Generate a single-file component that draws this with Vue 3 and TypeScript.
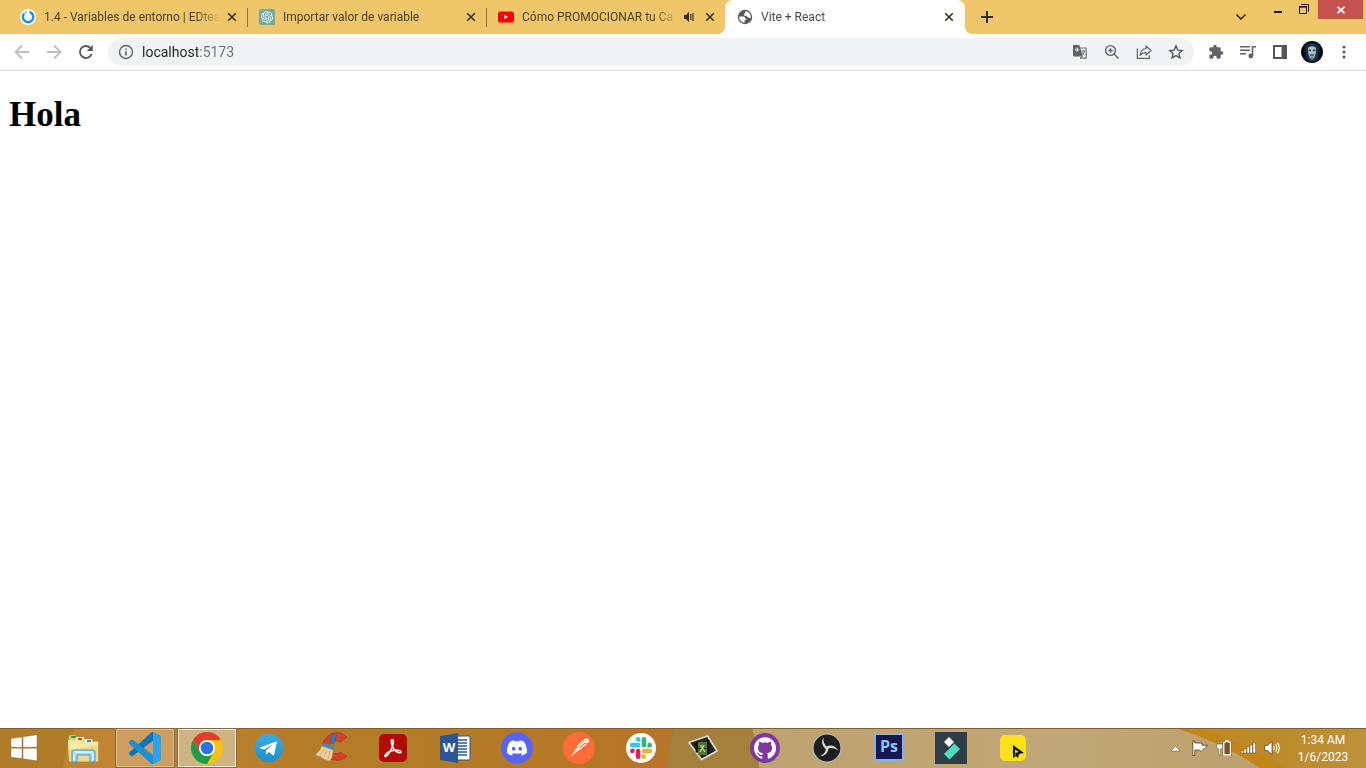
<script setup lang="ts">
import { ref } from 'vue'

interface Tab {
  id: string
  title: string
  audio?: boolean
  active?: boolean
}

const tabs: Tab[] = [
  { id: 'edteam', title: '1.4 - Variables de entorno | EDtea' },
  { id: 'chat', title: 'Importar valor de variable' },
  { id: 'youtube', title: 'Cómo PROMOCIONAR tu Ca', audio: true },
  { id: 'vite', title: 'Vite + React', active: true },
]

const address = ref('localhost:5173')

const slackColors = ['#e01e5a', '#36c5f0', '#2eb67d', '#ecb22e']
const bars = [2, 4, 6, 8, 10]
</script>

<template>
  <div class="desktop">
    <header class="tabstrip">
      <div class="tabs" role="tablist">
        <div
          v-for="tab in tabs"
          :key="tab.id"
          class="tab"
          :class="{ active: tab.active }"
          role="tab"
          :aria-selected="!!tab.active"
        >
          <svg v-if="tab.id === 'edteam'" class="favicon" viewBox="0 0 16 16">
            <circle cx="8" cy="8" r="8" fill="#fff" />
            <path d="M9.5 3A5.2 5.2 0 1 1 4.2 4.5" fill="none" stroke="#1f8fe0" stroke-width="2.4" />
            <path d="M4.6 4.2A5.2 5.2 0 0 1 7.2 2.9" fill="none" stroke="#8cc8f2" stroke-width="2" />
          </svg>
          <svg v-else-if="tab.id === 'chat'" class="favicon" viewBox="0 0 32 32">
            <path d="M5 0h22a5 5 0 0 1 5 5v27H5a5 5 0 0 1-5-5V5a5 5 0 0 1 5-5z" fill="#74aa9c" />
            <path
              transform="translate(4 4)"
              fill="#fff"
              d="M22.2819 9.8211a5.9847 5.9847 0 0 0-.5157-4.9108 6.0462 6.0462 0 0 0-6.5098-2.9A6.0651 6.0651 0 0 0 4.9807 4.1818a5.9847 5.9847 0 0 0-3.9977 2.9 6.0462 6.0462 0 0 0 .7427 7.0966 5.98 5.98 0 0 0 .511 4.9107 6.051 6.051 0 0 0 6.5146 2.9001A5.9847 5.9847 0 0 0 13.2599 24a6.0557 6.0557 0 0 0 5.7718-4.2058 5.9894 5.9894 0 0 0 3.9977-2.9001 6.0557 6.0557 0 0 0-.7475-7.0729zm-9.022 12.6081a4.4755 4.4755 0 0 1-2.8764-1.0408l.1419-.0804 4.7783-2.7582a.7948.7948 0 0 0 .3927-.6813v-6.7369l2.02 1.1686a.071.071 0 0 1 .038.052v5.5826a4.504 4.504 0 0 1-4.4945 4.4944zm-9.6607-4.1254a4.4708 4.4708 0 0 1-.5346-3.0137l.142.0852 4.783 2.7582a.7712.7712 0 0 0 .7806 0l5.8428-3.3685v2.3324a.0804.0804 0 0 1-.0332.0615L9.74 19.9502a4.4992 4.4992 0 0 1-6.1408-1.6464zM2.3408 7.8956a4.485 4.485 0 0 1 2.3655-1.9728V11.6a.7664.7664 0 0 0 .3879.6765l5.8144 3.3543-2.0201 1.1685a.0757.0757 0 0 1-.071 0l-4.8303-2.7865A4.504 4.504 0 0 1 2.3408 7.872zm16.5963 3.8558L13.1038 8.364 15.1192 7.2a.0757.0757 0 0 1 .071 0l4.8303 2.7913a4.4944 4.4944 0 0 1-.6765 8.1042v-5.6772a.79.79 0 0 0-.407-.667zm2.0107-3.0231l-.142-.0852-4.7735-2.7818a.7759.7759 0 0 0-.7854 0L9.409 9.2297V6.8974a.0662.0662 0 0 1 .0284-.0615l4.8303-2.7866a4.4992 4.4992 0 0 1 6.6802 4.66zM8.3065 12.863l-2.02-1.1638a.0804.0804 0 0 1-.038-.0567V6.0742a4.4992 4.4992 0 0 1 7.3757-3.4537l-.142.0805L8.704 5.459a.7948.7948 0 0 0-.3927.6813zm1.0976-2.3654l2.602-1.4998 2.6069 1.4998v2.9994l-2.5974 1.4997-2.6067-1.4997Z"
            />
          </svg>
          <svg v-else-if="tab.id === 'youtube'" class="favicon" viewBox="0 0 16 16">
            <rect y="2.5" width="16" height="11" rx="2.6" fill="#f00" />
            <path d="M6.3 5.9v4.2l3.8-2.1z" fill="#fff" />
          </svg>
          <svg v-else class="favicon" viewBox="0 0 16 16">
            <circle cx="8" cy="8" r="7.2" fill="#55595d" />
            <path
              d="M2.2 7.5h4.3c1.4 0 1.6 1 1.4 1.9h1.3v1.6H7.6v2.8a5.8 5.8 0 0 1-5.4-6.3zM8.2 2.2a5.8 5.8 0 0 1 5.6 6.2c-.7 1-1.9.9-2.3-.2-.8.2-1.9-.3-1.9-1.4H7.2V5c0-.8 1-.9 1-1.6z"
              fill="#fff"
            />
          </svg>
          <span class="title">{{ tab.title }}</span>
          <svg v-if="tab.audio" class="audio" viewBox="0 0 16 16">
            <path d="M2 6h2l3-3.2v10.4L4 10H2z" fill="#37301c" />
            <path d="M8.8 5v6M11 4v8" stroke="#37301c" stroke-width="1.2" />
          </svg>
          <button class="close-tab" type="button" aria-label="Cerrar pestaña">
            <svg viewBox="0 0 16 16"><path d="M4.2 4.2l7.6 7.6M11.8 4.2l-7.6 7.6" stroke="currentColor" stroke-width="1.6" /></svg>
          </button>
        </div>
        <button class="new-tab" type="button" aria-label="Nueva pestaña">
          <svg viewBox="0 0 16 16"><path d="M8 2v12M2 8h12" stroke="#2c2c2c" stroke-width="2" /></svg>
        </button>
      </div>
      <div class="window-controls">
        <button class="tab-search" type="button" aria-label="Buscar pestañas">
          <svg viewBox="0 0 16 16"><path d="M3.5 5.5L8 10l4.5-4.5" fill="none" stroke="#37301c" stroke-width="1.7" /></svg>
        </button>
        <button class="win" type="button" aria-label="Minimizar">
          <svg viewBox="0 0 16 16"><path d="M4 10h8v2H4z" fill="#1d1a10" /></svg>
        </button>
        <button class="win" type="button" aria-label="Restaurar">
          <svg viewBox="0 0 16 16">
            <path d="M3.5 5.5h7v7h-7zM5.5 4V3.500h7v7H12" fill="none" stroke="#1d1a10" />
            <path d="M3 5h8v1.6H3z" fill="#1d1a10" />
          </svg>
        </button>
        <button class="win-close" type="button" aria-label="Cerrar">
          <svg viewBox="0 0 16 16"><path d="M4.5 4.8l7 6.4M11.5 4.8l-7 6.4" stroke="#fff" stroke-width="1.8" /></svg>
        </button>
      </div>
    </header>

    <nav class="toolbar">
      <button class="tool" type="button" aria-label="Atrás" disabled>
        <svg viewBox="0 0 16 16"><path d="M15 8H2M8 1.5L1.5 8 8 14.5" fill="none" stroke="#bbbdc0" stroke-width="1.8" /></svg>
      </button>
      <button class="tool" type="button" aria-label="Adelante" disabled>
        <svg viewBox="0 0 16 16"><path d="M1 8h13M8 1.5L14.5 8 8 14.5" fill="none" stroke="#bbbdc0" stroke-width="1.8" /></svg>
      </button>
      <button class="tool" type="button" aria-label="Recargar">
        <svg viewBox="0 0 16 16">
          <path d="M13.6 10A6 6 0 1 1 12.3 3.8" fill="none" stroke="#54585d" stroke-width="1.9" />
          <path d="M14.8 1v6H8.800z" fill="#54585d" />
        </svg>
      </button>
      <form class="omnibox" @submit.prevent>
        <svg class="info" viewBox="0 0 16 16">
          <circle cx="8" cy="8" r="6.5" fill="none" stroke="#5f6368" stroke-width="1.4" />
          <path d="M7.2 7.2h1.6v4.300H7.2zM7.2 4.4h1.6V6H7.2z" fill="#5f6368" />
        </svg>
        <input v-model="address" class="address" type="text" aria-label="Barra de direcciones" spellcheck="false" />
        <button class="action" type="button" aria-label="Traducir">
          <svg viewBox="0 0 16 16">
            <path d="M8 4h6.2v10.2H8" fill="none" stroke="#6f7377" stroke-width="1.2" />
            <path d="M1 1h6.3l3.5 11.5H2a1 1 0 0 1-1-1z" fill="#5f6368" />
            <path d="M7.2 5.4H5.1v.9h1.2a1.5 1.5 0 1 1-.3-1.8" fill="none" stroke="#f1f3f4" stroke-width=".9" />
            <path d="M9.3 7h4M11.2 6v1M12.5 7c-.3 1.6-1.2 2.7-2.3 3.5M10 8.5c.8 1.3 1.7 2 2.7 2.5" fill="none" stroke="#5f6368" stroke-width=".9" />
            <path d="M8 14.5l2.5-2" stroke="#5f6368" />
          </svg>
        </button>
        <button class="action" type="button" aria-label="Zoom">
          <svg viewBox="0 0 16 16">
            <circle cx="6.5" cy="6.5" r="4.9" fill="none" stroke="#5f6368" stroke-width="1.4" />
            <path d="M10 10l4.5 4.5M4.2 6.5h4.6M6.5 4.2v4.6" stroke="#5f6368" stroke-width="1.4" />
          </svg>
        </button>
        <button class="action" type="button" aria-label="Compartir">
          <svg viewBox="0 0 16 16">
            <path d="M1.3 4.500v9.800h12v-3" fill="none" stroke="#5f6368" stroke-width="1.2" />
            <path d="M10 2l5 4.500-5 4.500V8.500C7.500 8.500 5.500 9.300 4 11.300 4.500 7.500 6.500 5 10 4.500z" fill="none" stroke="#5f6368" stroke-width="1.2" stroke-linejoin="round" />
          </svg>
        </button>
        <button class="action" type="button" aria-label="Favorito">
          <svg viewBox="0 0 16 16">
            <path d="M8 1.9l1.8 4.2 4.5.4-3.4 3 1 4.4L8 11.600l-3.900 2.300 1-4.400-3.400-3 4.500-.4z" fill="none" stroke="#54585d" stroke-width="1.4" />
          </svg>
        </button>
      </form>
      <button class="tool" type="button" aria-label="Extensiones">
        <svg viewBox="0 0 24 24"><path fill="#5f6368" d="M20.5 11H19V7c0-1.100-.9-2-2-2h-4V3.500a2.500 2.500 0 0 0-5 0V5H4c-1.100 0-2 .9-2 2v3.800h1.500a2.700 2.700 0 0 1 0 5.400H2V20c0 1.100.9 2 2 2h3.800v-1.500a2.700 2.700 0 0 1 5.400 0V22H17c1.100 0 2-.9 2-2v-4h1.500a2.500 2.500 0 0 0 0-5z" /></svg>
      </button>
      <button class="tool" type="button" aria-label="Multimedia">
        <svg viewBox="0 0 16 16">
          <path d="M0 2.800h10M0 6.300h10M0 9.800h6M12.500 12V2.800H16" fill="none" stroke="#5f6368" stroke-width="1.600" />
          <circle cx="10.800" cy="12" r="2.400" fill="#5f6368" />
        </svg>
      </button>
      <button class="tool" type="button" aria-label="Panel lateral">
        <svg viewBox="0 0 16 16"><path d="M1 1h14v14H1zM3 3v10h6.500V3z" fill="#54585d" fill-rule="evenodd" /></svg>
      </button>
      <button class="avatar" type="button" aria-label="Perfil">
        <svg viewBox="0 0 22 22">
          <circle cx="11" cy="11" r="11" fill="#050a14" />
          <path d="M4 7c1-4 4-5 7-5s6 1 7 5l-1 9-3 4H8l-3-4z" fill="#123049" />
          <path d="M7 7c2-2.500 6-2.500 8 0l-.3 6-1.700 4-2 2-2-2-1.700-4z" fill="#a9c0c2" />
          <path d="M8 9l2 .6M14 9l-2 .6" stroke="#050a14" stroke-width="1.200" />
          <path d="M8.500 13.300c1 .8 1.500 0 2.500 0s1.500.8 2.500 0c-.5 1.500-1.500 1.300-2.500 1.200-1 .1-2 .3-2.500-1.200zM10.600 15.500h.8v2.500h-.8z" fill="#050a14" />
        </svg>
      </button>
      <button class="tool" type="button" aria-label="Menú">
        <svg viewBox="0 0 16 16"><circle cx="8" cy="3" r="1.5" fill="#54585d" /><circle cx="8" cy="8" r="1.5" fill="#54585d" /><circle cx="8" cy="13" r="1.5" fill="#54585d" /></svg>
      </button>
    </nav>

    <main class="page">
      <h1>Hola</h1>
    </main>

    <footer class="taskbar">
      <svg class="wallpaper" viewBox="0 0 1366 40" preserveAspectRatio="none" aria-hidden="true">
        <defs>
          <linearGradient id="wall-left">
            <stop offset="0" stop-color="#b9822f" /><stop offset=".1" stop-color="#c18535" />
            <stop offset=".2" stop-color="#b57d2a" /><stop offset=".35" stop-color="#b37b28" />
            <stop offset=".48" stop-color="#b87428" />
          </linearGradient>
          <linearGradient id="wall-mid">
            <stop offset="0" stop-color="#bea26f" /><stop offset=".5" stop-color="#c1a878" /><stop offset="1" stop-color="#b99c66" />
          </linearGradient>
          <linearGradient id="wall-right">
            <stop offset="0" stop-color="#c48a22" /><stop offset=".5" stop-color="#bc8a2a" /><stop offset="1" stop-color="#bc923c" />
          </linearGradient>
        </defs>
        <path d="M0 0h1366v40H0z" fill="url(#wall-left)" />
        <path d="M0 0h75q-9 18-12 40H0z" fill="#b17c29" />
        <path d="M674 0h78l8 40h-93q1-22 7-40z" fill="#a5803c" />
        <path d="M752 0h614v40H759q-1-22-7-40z" fill="url(#wall-mid)" />
        <path d="M1176 0h190v40h-106q-36-25-84-40z" fill="url(#wall-right)" />
        <path d="M1176 0h24q44 16 85 40h-25q-36-25-84-40z" fill="#c28618" />
        <path d="M0 0h1366v1H0z" fill="#80602a" />
      </svg>

      <button class="start" type="button" aria-label="Inicio">
        <svg viewBox="0 0 28 28"><path d="M1 4.500l11-1.600v10.400H1zM13 2.700L27 .8v12.500H13zM1 14.300h11v10.300L1 23.200zM13 14.300h14v12.500l-14-2z" fill="#fff" stroke="#80602a" stroke-width=".4" /></svg>
      </button>

      <div class="apps">
        <button class="app" type="button" aria-label="Explorador">
          <svg viewBox="0 0 32 32">
            <path d="M1.500 6l1-3h6l1 2h7l1 2h7l1 2h6v21H2z" fill="#edcf76" stroke="#b38b34" stroke-width=".6" />
            <path d="M4 4h5v2H4z" fill="#2ea043" /><path d="M9 5h8v3H9z" fill="#fff5d0" /><path d="M11 6h4v2h-4z" fill="#d8402c" /><path d="M17 7h8v3h-8z" fill="#fff5d0" /><path d="M20 8h4v2h-4z" fill="#2f8ed6" />
            <path d="M1 8h14l1.500 2H31v19H2z" fill="#f9e9a6" />
            <path d="M2 18l29-5v16H2z" fill="#eed98b" />
            <path d="M5 20q0-2 2-2h19q2 0 2 2v10h-5v-7H10v7H5z" fill="#a9d9ef" stroke="#4a96c4" />
            <path d="M7 20h19M7 22v6M26 22v6" stroke="#e2f5fc" stroke-width="1.500" />
          </svg>
        </button>
        <button class="app running" type="button" aria-label="Visual Studio Code">
          <svg viewBox="0 0 24 24">
            <path fill="#0f75bb" d="M23.150 2.587L18.210.210a1.494 1.494 0 0 0-1.705.290l-9.460 8.630-4.120-3.128a.999.999 0 0 0-1.276.057L.327 7.261A1 1 0 0 0 .326 8.740L3.899 12 .326 15.260a1 1 0 0 0 .001 1.479L1.650 17.940a.999.999 0 0 0 1.276.057l4.120-3.128 9.460 8.630a1.492 1.492 0 0 0 1.704.290l4.942-2.377A1.500 1.500 0 0 0 24 20.060V3.939a1.500 1.500 0 0 0-.850-1.352zm-5.146 14.861L10.826 12l7.178-5.448v10.896z" />
            <path fill="#1f8fd6" d="M1.650 6.060a1 1 0 0 1 1.276-.057L18 17.450V23.800a1.500 1.500 0 0 1-1.500-.300L.33 8.740a1 1 0 0 1 0-1.480z" />
            <path fill="#2ba3ec" d="M18 .15l5.150 2.437A1.500 1.500 0 0 1 24 3.939V20.060a1.500 1.500 0 0 1-.850 1.352L18 23.850z" />
          </svg>
        </button>
        <button class="app running current" type="button" aria-label="Google Chrome">
          <svg viewBox="0 0 32 32">
            <circle cx="16" cy="16" r="16" fill="#fbc116" />
            <path d="M2.140 8A16 16 0 0 1 29.860 8H16a8 8 0 0 0-6.930 12z" fill="#e33b2e" />
            <path d="M2.140 8A16 16 0 0 0 16 32l6.930-12A8 8 0 0 1 9.070 20z" fill="#229a48" />
            <circle cx="16" cy="16" r="8" fill="#fff" /><circle cx="16" cy="16" r="6.300" fill="#2a72e8" />
          </svg>
        </button>
        <button class="app" type="button" aria-label="Telegram">
          <svg viewBox="0 0 32 32">
            <defs>
              <linearGradient id="telegram" x1="0" y1="0" x2="0" y2="1">
                <stop offset="0" stop-color="#35aee4" /><stop offset="1" stop-color="#1f8fca" />
              </linearGradient>
            </defs>
            <circle cx="16" cy="16" r="14.300" fill="url(#telegram)" />
            <path d="M6.500 15.700L22.800 9.400q1.200-.3 1 1L21.200 22.300q-.3 1.300-1.500.6l-4-3-2 2q-.6.6-.8-.4l.2-3 7.300-6.600-9 5.700-4-1.200q-1-.3-.9-.7z" fill="#fff" />
          </svg>
        </button>
        <button class="app" type="button" aria-label="CCleaner">
          <svg viewBox="0 0 32 32">
            <path d="M32 5A14 14 0 1 0 32 24l-7-4a6.500 6.500 0 1 1 0-9.500z" fill="#d2402e" stroke="#a52c1e" stroke-width=".5" />
            <path d="M17 3l3-1.500L21.500 3l-3 9-3-1z" fill="#2682c5" stroke="#1763a0" stroke-width=".5" />
            <path d="M9 11l10 4-1 4-11-4z" fill="#2f91cf" />
            <path d="M7 14l11 4q0 7-3 11-6-1-9-4l-6-2q5-4 7-9z" fill="#efcf9c" stroke="#b58c56" stroke-width=".6" />
            <path d="M9 17l-4 6M12 18l-3 7M15 19l-2 8" stroke="#bd965f" stroke-width=".7" />
          </svg>
        </button>
        <button class="app" type="button" aria-label="Adobe Acrobat">
          <svg viewBox="0 0 32 32">
            <rect x="2" y="2" width="28" height="28" rx="5" fill="#b30b00" />
            <path d="M8 23.500c2-4 6-5 10-5.300 3-.2 6 .3 6 1.700s-3 1-5-.8c-3-2.500-4.500-7-4.700-9.500s1.900-2.400 2.100-.2c.3 4-3.400 11-5.900 13.700-1.500 1.600-3.200 1.600-2.500.4z" fill="none" stroke="#fff" stroke-width="1.600" />
          </svg>
        </button>
        <button class="app" type="button" aria-label="Word">
          <svg viewBox="0 0 32 32">
            <path d="M17 4h13q1 0 1 1v22q0 1-1 1H17z" fill="#fff" stroke="#2b579a" />
            <path d="M19 8h9M19 11h9M19 14h9M19 17h9M19 20h9M19 23h9" stroke="#2b579a" stroke-width="1.300" />
            <path d="M1 4l18-3v30L1 28z" fill="#2b579a" />
            <text x="10" y="20" text-anchor="middle" class="word-mark">W</text>
          </svg>
        </button>
        <button class="app" type="button" aria-label="Discord">
          <svg viewBox="0 0 32 32">
            <circle cx="16" cy="16" r="16" fill="#5865f2" />
            <path
              transform="translate(6 6) scale(.83)"
              fill="#fff"
              d="M20.317 4.370a19.791 19.791 0 0 0-4.885-1.515.074.074 0 0 0-.079.037c-.211.375-.445.865-.608 1.250-1.845-.276-3.680-.276-5.487 0-.164-.393-.406-.874-.618-1.250a.077.077 0 0 0-.079-.037 19.736 19.736 0 0 0-4.885 1.515.070.070 0 0 0-.032.028C.533 9.046-.319 13.580.099 18.058a.082.082 0 0 0 .031.056c2.053 1.508 4.041 2.423 5.993 3.029a.078.078 0 0 0 .084-.028c.462-.630.873-1.295 1.226-1.994a.076.076 0 0 0-.042-.106c-.653-.248-1.274-.550-1.872-.892a.077.077 0 0 1-.008-.128c.126-.094.252-.192.372-.291a.074.074 0 0 1 .078-.011c3.928 1.793 8.180 1.793 12.061 0a.074.074 0 0 1 .079.010c.120.099.246.198.373.292a.077.077 0 0 1-.007.128 12.299 12.299 0 0 1-1.873.891.077.077 0 0 0-.041.107c.360.698.772 1.363 1.225 1.993a.076.076 0 0 0 .084.029c1.961-.607 3.950-1.522 6.002-3.029a.077.077 0 0 0 .031-.055c.500-5.177-.838-9.674-3.549-13.660a.061.061 0 0 0-.031-.029zM8.020 15.331c-1.183 0-2.157-1.086-2.157-2.419 0-1.333.956-2.419 2.157-2.419 1.211 0 2.176 1.095 2.157 2.419 0 1.333-.956 2.419-2.157 2.419zm7.975 0c-1.183 0-2.157-1.086-2.157-2.419 0-1.333.955-2.419 2.157-2.419 1.211 0 2.176 1.095 2.157 2.419 0 1.333-.946 2.419-2.157 2.419z"
            />
          </svg>
        </button>
        <button class="app" type="button" aria-label="Postman">
          <svg viewBox="0 0 32 32">
            <circle cx="16" cy="16" r="16" fill="#ff6c37" />
            <path d="M15.500 15.500l6-5.500M17 17.200l6-5.200M14 14.500l6.500-6" stroke="#fff" stroke-width="1.200" />
            <path d="M7.500 25l5-7.500 2.500-2.500 2 2-2.800 2.700z" fill="#fff" />
            <circle cx="23.500" cy="8.700" r="2.500" fill="#fff" />
            <path d="M22.500 8.500l2 1.500M9.500 23l4.500-4.500" stroke="#ff6c37" stroke-width=".8" />
          </svg>
        </button>
        <button class="app" type="button" aria-label="Slack">
          <svg viewBox="0 0 32 32">
            <circle cx="16" cy="16" r="15" fill="#fff" />
            <g transform="translate(5 5) scale(.92)">
              <path
                v-for="(color, i) in slackColors"
                :key="color"
                :fill="color"
                :transform="`rotate(${i * 90} 12 12)`"
                d="M5.042 15.165a2.528 2.528 0 0 1-2.520 2.523A2.528 2.528 0 0 1 0 15.165a2.527 2.527 0 0 1 2.522-2.520h2.520v2.520zM6.313 15.165a2.527 2.527 0 0 1 2.521-2.520 2.527 2.527 0 0 1 2.521 2.520v6.313A2.528 2.528 0 0 1 8.834 24a2.528 2.528 0 0 1-2.521-2.522v-6.313z"
              />
            </g>
          </svg>
        </button>
        <button class="app" type="button" aria-label="Camtasia">
          <svg viewBox="0 0 32 32">
            <path d="M2 10.500L20.500 4l9.500 15-15.500 8.500z" fill="#22251f" stroke="#d8dad4" stroke-width="1.800" stroke-linejoin="round" />
            <path d="M11 10h9v13h-9z" fill="#55742f" />
            <path d="M11 16.500h9" stroke="#22301a" />
            <path d="M9.500 9.500v12M21.500 8v14" stroke="#0c0d0a" stroke-width="1.800" stroke-dasharray="2 1" />
            <path d="M13.500 13l4.500 7M17 13l-4 7" stroke="#c3dc96" stroke-width="1.300" />
          </svg>
        </button>
        <button class="app" type="button" aria-label="GitHub Desktop">
          <svg viewBox="0 0 32 32">
            <circle cx="16" cy="16" r="15" fill="#7e37a0" />
            <path
              transform="translate(5 5) scale(.92)"
              fill="#fff"
              d="M12 .297c-6.630 0-12 5.373-12 12 0 5.303 3.438 9.800 8.205 11.385.6.113.820-.258.820-.577 0-.285-.010-1.040-.015-2.040-3.338.724-4.042-1.610-4.042-1.610C4.422 18.070 3.633 17.700 3.633 17.700c-1.087-.744.084-.729.084-.729 1.205.084 1.838 1.236 1.838 1.236 1.070 1.835 2.809 1.305 3.495.998.108-.776.417-1.305.760-1.605-2.665-.300-5.466-1.332-5.466-5.930 0-1.310.465-2.380 1.235-3.220-.135-.303-.540-1.523.105-3.176 0 0 1.005-.322 3.300 1.230.960-.267 1.980-.399 3-.405 1.020.006 2.040.138 3 .405 2.280-1.552 3.285-1.230 3.285-1.230.645 1.653.240 2.873.120 3.176.765.840 1.230 1.910 1.230 3.220 0 4.610-2.805 5.625-5.475 5.920.420.360.810 1.096.810 2.220 0 1.606-.015 2.896-.015 3.286 0 .315.210.690.825.570C20.565 22.092 24 17.592 24 12.297c0-6.627-5.373-12-12-12"
            />
          </svg>
        </button>
        <button class="app" type="button" aria-label="OBS Studio">
          <svg viewBox="0 0 32 32">
            <circle cx="16" cy="16" r="14" fill="#1f1e20" stroke="#bdb9b4" stroke-width="1.200" />
            <g fill="#d6d4d2">
              <path d="M12.500 5q-4 8 3 12.500l1.500-2Q11.500 12 12.500 5z" />
              <path d="M12.500 5q-4 8 3 12.500l1.500-2Q11.500 12 12.500 5z" transform="rotate(120 16 16)" />
              <path d="M12.500 5q-4 8 3 12.500l1.500-2Q11.500 12 12.500 5z" transform="rotate(240 16 16)" />
            </g>
          </svg>
        </button>
        <button class="app" type="button" aria-label="Photoshop">
          <svg viewBox="0 0 32 32">
            <path d="M1 1h30v28H1z" fill="#80b5e2" /><path d="M3 3h26v24H3z" fill="#1b1452" />
            <text x="16" y="20" text-anchor="middle" class="ps-mark">Ps</text>
          </svg>
        </button>
        <button class="app" type="button" aria-label="Filmora">
          <svg viewBox="0 0 32 32">
            <path d="M0 0h32v32H0z" fill="#2f3d46" />
            <path d="M14 5l5 5-5 5-5-5z" fill="#fff" /><path d="M19.500 11.500l5.500 5.500-10.500 10.500L9 22z" fill="#4be0bd" />
          </svg>
        </button>
        <button class="app" type="button" aria-label="Grabador">
          <svg viewBox="0 0 32 32">
            <rect x="3" y="3" width="26" height="26" rx="5" fill="#fbe11c" />
            <path d="M16 13v13l3-2 2 2 1-4 5-1z" fill="#0b0a02" />
            <path d="M18 17.500l4 2.500-4 1zM17.500 22.500l2-.5-2 2z" fill="#fbe11c" />
          </svg>
        </button>
      </div>

      <div class="tray">
        <button class="tray-icon" type="button" aria-label="Mostrar iconos ocultos">
          <svg viewBox="0 0 16 16"><path d="M3 11l4.500-5 4.500 5z" fill="#fff" stroke="#6f5a30" stroke-width=".6" /></svg>
        </button>
        <button class="tray-icon" type="button" aria-label="Centro de actividades">
          <svg viewBox="0 0 16 16">
            <path d="M.8 1v14.500h2V10h4.500l1.700 1.500L11 9.500q2 .5 4.500-4.500l-5 .5L9.500 3H2.800V1z" fill="#fff" stroke="#5d4a25" stroke-width=".9" />
          </svg>
        </button>
        <button class="tray-icon" type="button" aria-label="Batería">
          <svg viewBox="0 0 16 16">
            <path d="M9.500 2.200V1h3v1.200h2V15H7.800V2.200z" fill="#7a5520" stroke="#5d4a25" stroke-width="2.200" />
            <path d="M9.500 2.200V1h3v1.200h2V15H7.800V2.200z" fill="#7a5520" stroke="#fff" stroke-width="1.300" />
            <path d="M.5 4h6v3.500l-2 1.500v6H2.800V9L.5 7.500zM1.500 1h1.300v3H1.500zM4.500 1h1.300v3H4.500z" fill="#fff" stroke="#5d4a25" stroke-width=".5" />
          </svg>
        </button>
        <button class="tray-icon" type="button" aria-label="Red">
          <svg viewBox="0 0 16 16">
            <rect v-for="(h, i) in bars" :key="h" :x="i * 3 + 1" :y="13 - h" width="2.600" :height="h" fill="#fff" stroke="#5d4a25" stroke-width=".5" />
          </svg>
        </button>
        <button class="tray-icon" type="button" aria-label="Volumen">
          <svg viewBox="0 0 16 16">
            <path d="M.5 5.500h3L8 1.500v13l-4.500-4h-3z" fill="#fff" stroke="#5d4a25" stroke-width=".8" />
            <path d="M9.500 6q1.300 2 0 4M11.500 4q2.600 4 0 8M13.500 2.500q3.500 5.500 0 11" fill="none" stroke="#fff" stroke-width="1.100" />
          </svg>
        </button>
        <time class="clock" datetime="2023-01-06T01:34">
          <span>1:34 AM</span>
          <span>1/6/2023</span>
        </time>
      </div>
    </footer>
  </div>
</template>

<style scoped>
.desktop {
  display: flex;
  flex-direction: column;
  min-height: 100vh;
  background: #fff;
  font-family: Roboto, "Noto Sans", sans-serif;
  font-size: 12px;
  color: #3c4043;
}

button {
  display: flex;
  align-items: center;
  justify-content: center;
  padding: 0;
  border: 0;
  background: none;
  color: inherit;
  font: inherit;
}

svg {
  display: block;
  flex: none;
}

.tabstrip {
  display: flex;
  justify-content: space-between;
  height: 34px;
  background: #efc76a;
}

.tabs {
  display: flex;
  flex: 1;
  min-width: 0;
  padding-left: 8px;
}

.tab {
  position: relative;
  display: flex;
  flex: 0 1 239px;
  align-items: center;
  box-sizing: border-box;
  min-width: 0;
  padding: 0 7px 0 12px;
  color: #4a3f25;
}

.tab:nth-child(-n + 2)::after {
  position: absolute;
  top: 8px;
  right: -1px;
  width: 1px;
  height: 19px;
  background: #8c753f;
  content: "";
}

.tab.active {
  flex-basis: 240px;
  padding-right: 8px;
  border-radius: 8px 8px 0 0;
  background: #fff;
  color: #45494d;
}

.tab.active::before,
.tab.active::after {
  position: absolute;
  bottom: 0;
  width: 8px;
  height: 8px;
  content: "";
}

.tab.active::before {
  right: 100%;
  background: radial-gradient(circle at 0 0, transparent 8px, #fff 8px);
}

.tab.active::after {
  left: 100%;
  background: radial-gradient(circle at 100% 0, transparent 8px, #fff 8px);
}

.favicon,
.audio {
  width: 16px;
  height: 16px;
}

.title {
  flex: 1;
  min-width: 0;
  margin: 0 4px 0 8px;
  overflow: hidden;
  line-height: 18px;
  white-space: nowrap;
  mask-image: linear-gradient(to left, transparent, #000 24px);
}

.audio {
  margin-right: 4px;
}

.close-tab,
.close-tab svg {
  width: 16px;
  height: 16px;
}

.close-tab {
  color: #37301c;
}

.new-tab {
  width: 28px;
  margin-left: 8px;
}

.new-tab svg,
.tab-search svg,
.win svg,
.win-close svg {
  width: 16px;
  height: 16px;
}

.window-controls {
  display: flex;
  align-items: flex-start;
  padding-right: 3px;
}

.tab-search {
  width: 28px;
  height: 34px;
  margin-right: 10px;
}

.win {
  width: 26px;
  height: 18px;
}

.win-close {
  width: 45px;
  height: 19px;
  margin-left: 1px;
  background: #c75050;
}

.toolbar {
  display: flex;
  align-items: center;
  height: 36px;
  padding: 0 6px;
  border-bottom: 1px solid #dadce0;
}

.tool {
  width: 32px;
  height: 28px;
}

.tool svg {
  width: 16px;
  height: 16px;
}

.omnibox {
  display: flex;
  flex: 1;
  align-items: center;
  height: 28px;
  margin: 0 6px;
  padding: 0 2px 0 10px;
  border-radius: 14px;
  background: #f1f3f4;
}

.info {
  width: 16px;
  height: 16px;
}

.address {
  flex: 1;
  min-width: 0;
  margin-left: 8px;
  padding: 0;
  border: 0;
  outline: 0;
  background: linear-gradient(to right, #202124 56px, #6a6e73 56px);
  background-clip: text;
  color: transparent;
  font: 14px/20px Roboto, "Noto Sans", sans-serif;
}

.action {
  width: 32px;
  height: 28px;
}

.action svg {
  width: 16px;
  height: 16px;
}

.avatar {
  width: 32px;
  height: 28px;
}

.avatar svg {
  width: 22px;
  height: 22px;
}

.page {
  flex: 1;
  padding: 0 9px;
}

h1 {
  margin: 24px 0;
  color: #000;
  font: bold 35px/40px "Liberation Serif", "Times New Roman", serif;
}

.taskbar {
  position: relative;
  display: flex;
  height: 40px;
  color: #fff;
}

.wallpaper {
  position: absolute;
  inset: 0;
  width: 100%;
  height: 100%;
}

.start,
.apps,
.tray {
  position: relative;
}

.start {
  width: 48px;
}

.start svg {
  width: 28px;
  height: 28px;
}

.apps {
  display: flex;
  flex: 1;
  gap: 2px;
  padding-left: 5px;
}

.app {
  box-sizing: border-box;
  width: 60px;
  height: 40px;
}

.app svg {
  width: 32px;
  height: 32px;
}

.running {
  border: 1px solid #8a6a3a;
  background: #cd9e60;
  box-shadow: inset 0 0 0 1px #dcba8a;
}

.current {
  background: #cfb384;
  box-shadow: inset 0 0 0 1px #f6ebd8;
}

.word-mark {
  fill: #fff;
  font: bold 13px "Open Sans", sans-serif;
}

.ps-mark {
  fill: #8ac6f5;
  font: bold 16px "Open Sans", sans-serif;
}

.tray {
  display: flex;
  align-items: center;
}

.tray-icon {
  width: 24px;
  height: 40px;
}

.tray-icon svg {
  width: 16px;
  height: 16px;
}

.clock {
  display: flex;
  flex-direction: column;
  width: 82px;
  padding: 2px 4px 0 0;
  box-sizing: border-box;
  line-height: 17px;
  text-align: center;
}
</style>

<style>
body {
  margin: 0;
}
</style>
